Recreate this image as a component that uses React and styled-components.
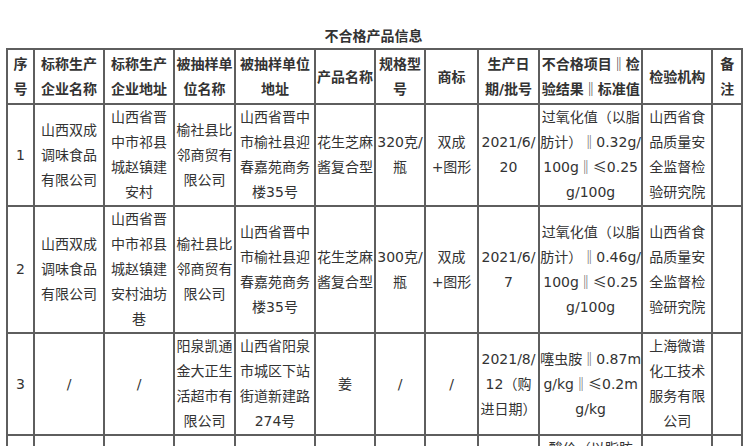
import React from "react";
import styled, { createGlobalStyle } from "styled-components";

const Global = createGlobalStyle`
  html, body { margin: 0; padding: 0; background: #fff; }
  body { font-family: "DejaVu Sans", "Noto Sans CJK SC", sans-serif; color: #333; }
`;

const Page = styled.div`
  padding: 0 4px 0 6px;
`;

const Title = styled.div`
  margin-top: 24px;
  height: 24px;
  line-height: 24px;
  text-align: center;
  font-size: 14px;
  font-weight: bold;
  color: #333;
`;

const Table = styled.table`
  border-collapse: collapse;
  table-layout: fixed;
  width: 735.3px;
  font-size: 14px;
  line-height: 25px;
`;

const HeadCell = styled.th`
  border: 2px solid #5e5e5e;
  padding: 2px 0.5px 1px;
  font-weight: bold;
  text-align: center;
  vertical-align: middle;
  word-break: normal;
  color: #333;
`;

const Cell = styled.td`
  border: 2px solid #5e5e5e;
  padding: 0;
  text-align: center;
  vertical-align: middle;
  word-break: break-all;
  color: #333;
`;

/* full-width symbols (‖, ≤) come from the CJK face as in the original */
const Sym = styled.span`
  font-family: "Noto Sans CJK SC", sans-serif;
  line-height: 1;
`;

const widths = [27, 70, 70, 61, 80, 60, 50, 53, 61, 103.3, 70, 30];

const withSymbols = (text) =>
  text.split(/([‖≤])/).map((part, i) =>
    part === "‖" || part === "≤" ? <Sym key={i}>{part}</Sym> : part
  );

const headers = [
  "序号",
  "标称生产企业名称",
  "标称生产企业地址",
  "被抽样单位名称",
  "被抽样单位地址",
  "产品名称",
  "规格型号",
  "商标",
  "生产日期/批号",
  "不合格项目‖检验结果‖标准值",
  "检验机构",
  "备注",
];

const rows = [
  [
    "1",
    "山西双成调味食品有限公司",
    "山西省晋中市祁县城赵镇建安村",
    "榆社县比邻商贸有限公司",
    "山西省晋中市榆社县迎春嘉苑商务楼35号",
    "花生芝麻酱复合型",
    "320克/瓶",
    "双成+图形",
    "2021/6/20",
    "过氧化值（以脂肪计）‖0.32g/100g‖≤0.25g/100g",
    "山西省食品质量安全监督检验研究院",
    "",
  ],
  [
    "2",
    "山西双成调味食品有限公司",
    "山西省晋中市祁县城赵镇建安村油坊巷",
    "榆社县比邻商贸有限公司",
    "山西省晋中市榆社县迎春嘉苑商务楼35号",
    "花生芝麻酱复合型",
    "300克/瓶",
    "双成+图形",
    "2021/6/7",
    "过氧化值（以脂肪计）‖0.46g/100g‖≤0.25g/100g",
    "山西省食品质量安全监督检验研究院",
    "",
  ],
  [
    "3",
    "/",
    "/",
    "阳泉凯通金大正生活超市有限公司",
    "山西省阳泉市城区下站街道新建路274号",
    "姜",
    "/",
    "/",
    "2021/8/12（购进日期）",
    "噻虫胺‖0.87mg/kg‖≤0.2mg/kg",
    "上海微谱化工技术服务有限公司",
    "",
  ],
  [
    "4",
    "/",
    "/",
    "阳泉凯通金大正生活超市有限公司",
    "山西省阳泉市城区下站街道",
    "花生",
    "/",
    "/",
    "2021/8/12",
    "酸价（以脂肪计）（KOH）‖4.5mg/g‖≤3mg/g；过氧化值（以脂肪计）‖0.32g/100g‖≤0.25g/100g",
    "山西省食品质量安全监督检验研究院",
    "",
  ],
];

export default function App() {
  return (
    <Page>
      <Global />
      <Title>不合格产品信息</Title>
      <Table>
        <colgroup>
          {widths.map((w, i) => (
            <col key={i} style={{ width: w }} />
          ))}
        </colgroup>
        <thead>
          <tr>
            {headers.map((h) => (
              <HeadCell key={h}>{withSymbols(h)}</HeadCell>
            ))}
          </tr>
        </thead>
        <tbody>
          {rows.map((r, ri) => (
            <tr key={ri}>
              {r.map((c, ci) => (
                <Cell key={ci}>{withSymbols(c)}</Cell>
              ))}
            </tr>
          ))}
        </tbody>
      </Table>
    </Page>
  );
}
